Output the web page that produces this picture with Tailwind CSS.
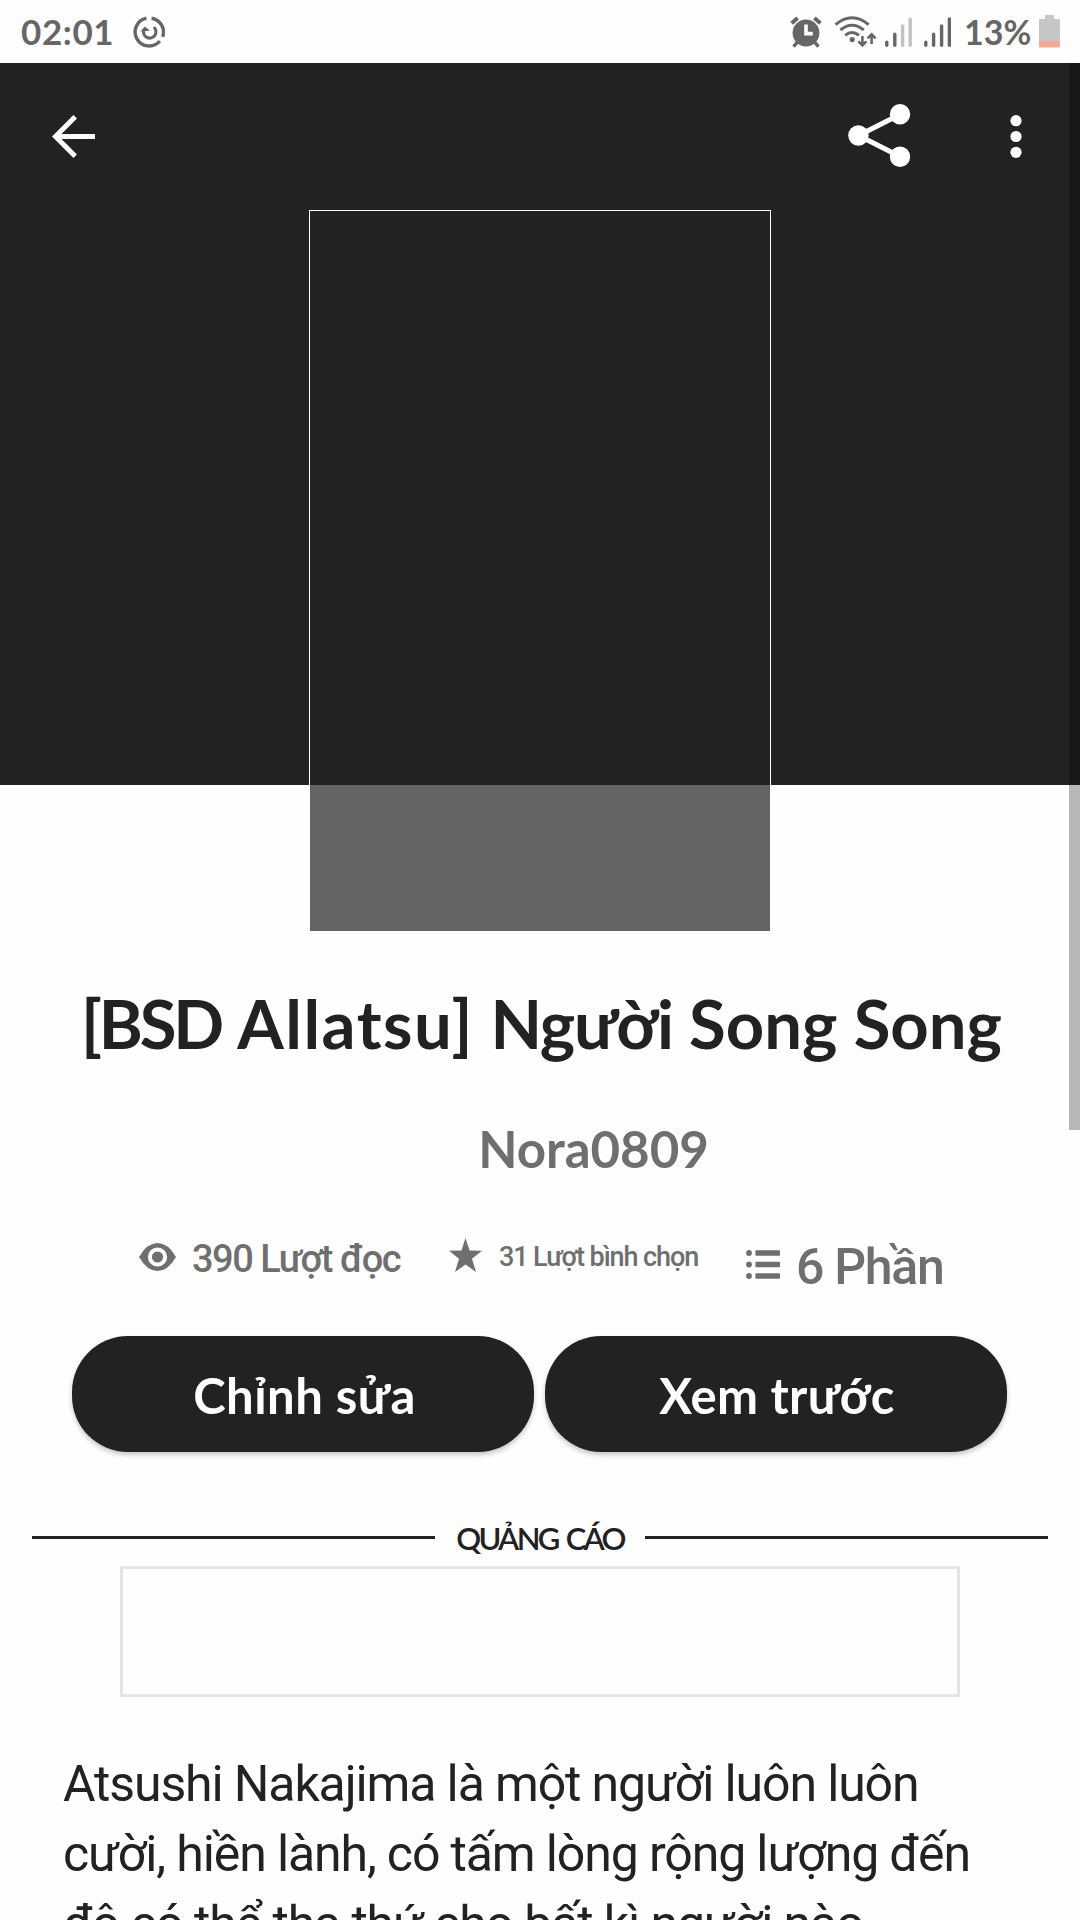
<!DOCTYPE html>
<html lang="vi">
  <head>
    <meta charset="UTF-8" />
    <meta name="viewport" content="width=device-width, initial-scale=1.0" />
    <title>[BSD Allatsu] Người Song Song</title>
    <script src="https://cdn.jsdelivr.net/npm/@tailwindcss/browser@4"></script>
  </head>
  <body class="bg-[#fefefe] text-[#222222] font-['Lato',sans-serif] font-medium">
    <div class="relative w-[1080px] h-[1920px] overflow-hidden flex flex-col">
      <!-- Status Bar Start -->
      <div class="h-[63px] shrink-0 flex items-center pl-[21px] pr-[19px] text-[#666666]">
        <span class="w-[92px] text-[35px] leading-[63px] font-bold tracking-[0.6px] whitespace-nowrap">02:01</span>
        <svg class="ml-5 w-8 h-8" viewBox="0 0 32 32" fill="none" stroke="#666" stroke-width="3.4">
          <path d="M18.6 2.2A14 14 0 0 1 29.6 20.8" />
          <path d="M26.8 25A14 14 0 1 1 13.4 2.2" />
          <path d="M20.8 11.2A6.2 6.2 0 1 1 10.6 15" stroke-width="3" />
          <path d="M7.4 15.4L11.8 10.4L17 14.8Z" fill="#666" stroke="none" />
        </svg>
        <div class="ml-auto flex items-center">
          <!-- alarm -->
          <svg class="w-8 h-8" viewBox="0 0 32 32" fill="#666">
            <circle cx="16" cy="17" r="13.4" />
            <path d="M1.6 7.2L7.6 2M24.4 2L30.4 7.2" stroke="#666" stroke-width="4" />
            <path d="M7.4 26L3.6 30.6M24.6 26L28.4 30.6" stroke="#666" stroke-width="3.4" />
            <path d="M16 8.4V17.6H22.8" fill="none" stroke="#fefefe" stroke-width="3.6" />
          </svg>
          <!-- wifi -->
          <svg class="ml-3 w-[43px] h-8" viewBox="0 0 43 32" fill="none" stroke="#666" stroke-width="3">
            <path d="M1.6 8.6Q18 -5 34.6 8.6" />
            <path d="M6.4 14Q18 4.4 29.8 14" />
            <path d="M11.2 19.4Q18 13.6 25 19.4" />
            <circle cx="18.2" cy="23.6" r="2.6" fill="#666" stroke="none" />
            <path d="M28.4 20V29M24.4 25.4L28.4 29.4L32.4 25.4" stroke-width="2.6" />
            <path d="M37.6 28V19M33.6 22.4L37.6 18.4L41.6 22.4" stroke-width="2.6" />
          </svg>
          <!-- sim 1 -->
          <svg class="ml-2 w-[27px] h-8" viewBox="0 0 27 32" stroke="#666" stroke-width="3.4" stroke-linecap="round">
            <path d="M1.8 26.2V29.2M9.8 18.2V29.2" />
            <path d="M17.6 10V29.2M25.2 3V29.2" stroke="#c2c2c2" />
          </svg>
          <!-- sim 2 -->
          <svg class="ml-3 w-[27px] h-8" viewBox="0 0 27 32" stroke="#666" stroke-width="3.4" stroke-linecap="round">
            <path d="M1.8 26.2V29.2M9.6 18.2V29.2M17.6 10V29.2M25.4 3V29.2" />
          </svg>
          <span class="ml-[13px] w-[71px] text-[34px] leading-[63px] font-bold whitespace-nowrap">13%</span>
          <!-- battery -->
          <svg class="ml-1 w-[22px] h-[33px]" viewBox="0 0 22 33">
            <path d="M6 0H15V4H21V26H0V4H6Z" fill="#c6c6c6" />
            <path d="M0 26H21V31.6Q21 32.6 20 32.6H1Q0 32.6 0 31.6Z" fill="#f7a890" />
          </svg>
        </div>
      </div>
      <!-- Status Bar End -->

      <!-- Header Start -->
      <header class="h-[722px] shrink-0 bg-[#222222] flex flex-col items-center">
        <div class="w-full h-[147px] shrink-0 flex items-center pl-[52px] pr-[58px] pb-[1px]">
          <svg class="w-[43px] h-[43px]" viewBox="0 0 43 43" fill="none" stroke="#fff" stroke-width="5">
            <path d="M43 21.5H4M23.2 1.8L3.5 21.5L23.2 41.2" />
          </svg>
          <svg class="ml-auto mb-[1px] w-[63px] h-[63px]" viewBox="0 0 63 63" fill="#fff">
            <path d="M52 10.5L10.5 31.5L52 52.5" fill="none" stroke="#fff" stroke-width="5" />
            <circle cx="52" cy="10.3" r="10.2" />
            <circle cx="10.4" cy="31.5" r="10.2" />
            <circle cx="52" cy="52.7" r="10.2" />
          </svg>
          <svg class="ml-[99px] w-[12px] h-[43px]" viewBox="0 0 12 43" fill="#fff">
            <circle cx="6" cy="5.7" r="5.6" />
            <circle cx="6" cy="21.5" r="5.6" />
            <circle cx="6" cy="37.3" r="5.6" />
          </svg>
        </div>
        <!-- Cover, hangs over the edge of the header -->
        <div class="w-[462px] h-[721px] shrink-0 border border-b-0 border-white flex flex-col">
          <div class="flex-1"></div>
          <div class="h-[146px] bg-[#646464]"></div>
        </div>
      </header>
      <!-- Header End -->

      <main class="pt-[198px] flex flex-col">
        <h1 class="pl-[3px] text-center text-[67px] leading-[80px] font-bold whitespace-nowrap">
          <span class="tracking-[-3.2px]">[BSD</span> <span class="tracking-[1.5px]">Allatsu]</span> <span class="tracking-[-1.2px]">Người</span> <span class="tracking-[0px]">Song Song</span>
        </h1>
        <p class="mt-14 pl-[107px] text-center text-[51px] leading-[60px] font-bold text-[#6f6f6f]">Nora0809</p>

        <!-- Stats Start -->
        <div class="mt-[58px] h-[60px] pl-[139px] flex items-start text-[#6f6f6f] font-['Roboto',sans-serif] whitespace-nowrap">
          <svg class="mt-[6px] w-[37px] h-7" viewBox="0 0 37 28" fill="none">
            <path d="M0 14Q8 0 18.5 0T37 14Q29 28 18.5 28T0 14Z" fill="#6f6f6f" />
            <circle cx="18.5" cy="14" r="7.6" stroke="#fefefe" stroke-width="4" />
          </svg>
          <span class="mt-[2px] ml-[16px] w-[212px] text-[38px] leading-10 tracking-[-1.5px]">390 Lượt đọc</span>
          <svg class="mt-[1px] ml-[45px] w-[33px] h-[34px]" viewBox="0 0 33 34" fill="#6f6f6f">
            <path d="M16.5 0L20.6 12.4L33 12.8L23 20.8L27 34L16.5 26.4L6 34L10 20.8L0 12.8L12.4 12.4Z" />
          </svg>
          <span class="mt-[5px] ml-[17px] w-[202px] text-[27px] leading-[30px] tracking-[-1.1px]">31 Lượt bình chọn</span>
          <svg class="mt-[13px] ml-[45px] w-[34px] h-[29px]" viewBox="0 0 34 29" fill="#6f6f6f">
            <circle cx="3" cy="3" r="2.9" />
            <circle cx="3" cy="14.5" r="2.9" />
            <circle cx="3" cy="26" r="2.9" />
            <rect x="9.4" y="0.2" width="24.6" height="5.6" rx="1" />
            <rect x="9.4" y="11.7" width="24.6" height="5.6" rx="1" />
            <rect x="9.4" y="23.2" width="24.6" height="5.6" rx="1" />
          </svg>
          <span class="ml-[16px] text-[50px] leading-[60px] tracking-[-1.3px]">6 Phần</span>
        </div>
        <!-- Stats End -->

        <div class="mt-[39px] px-[72px] flex gap-[11px] text-white text-[49px] font-bold">
          <button class="w-[462px] h-[116px] rounded-[56px] bg-[#222222] shadow-[0_3px_5px_rgba(0,0,0,0.22)] pt-[3px] pl-[3px] tracking-[0.5px]">Chỉnh sửa</button>
          <button class="w-[462px] h-[116px] rounded-[56px] bg-[#222222] shadow-[0_3px_5px_rgba(0,0,0,0.22)] pt-[3px] pl-[2px] tracking-[0.3px]">Xem trước</button>
        </div>

        <!-- Ad Start -->
        <div class="mt-[70px] h-[31px] px-8 flex items-center">
          <div class="w-[403px] h-[3px] bg-[#222222]"></div>
          <span class="flex-1 pt-[1px] text-center text-[31px] leading-[30px] font-semibold tracking-[-2.7px] whitespace-nowrap">QUẢNG<span class="ml-[3px]"> CÁO</span></span>
          <div class="w-[403px] h-[3px] bg-[#222222]"></div>
        </div>
        <div class="mt-[13px] mx-[120px] h-[131px] border-[3px] border-[#e4e4e4]"></div>
        <!-- Ad End -->

        <p class="mt-[52px] pl-[63px] font-['Roboto',sans-serif] font-normal text-[50px] leading-[70px] tracking-[-1.13px] whitespace-nowrap">
          Atsushi Nakajima là một người luôn luôn<br />
          cười, hiền lành, có tấm lòng rộng lượng đến<br />
          độ có thể tha thứ cho bất kì người nào
        </p>
      </main>

      <!-- Scrollbar -->
      <div class="absolute right-0 top-[63px] w-[11px] h-[1067px] bg-black/28"></div>
    </div>
  </body>
</html>
